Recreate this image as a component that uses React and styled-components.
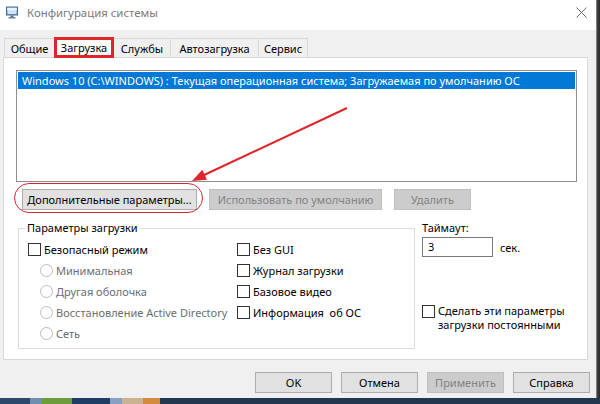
import styled, { createGlobalStyle, css } from "styled-components"

const GlobalStyle = createGlobalStyle`
	html, body {
		margin: 0;
		padding: 0;
	}
	body {
		font-family: "Noto Sans", "Liberation Sans", sans-serif;
		font-size: 11px;
		color: #000;
	}
`

const Screen = styled.div`
	position: relative;
	width: 600px;
	height: 404px;
	display: flex;
	flex-direction: column;
	overflow: hidden;
	background: #f0f0f0;
`

const Desktop = styled.div`
	flex: 1;
	min-height: 0;
	display: flex;
`

const Window = styled.div`
	width: 596px;
	display: flex;
	flex-direction: column;
	background: #f0f0f0;
`

const Edge = styled.div`
	width: 4px;
	background: linear-gradient(to right, #9a9a9a, #3a3a3a 40%, #2a2a2a);
`

const TitleBar = styled.div`
	height: 30px;
	box-sizing: border-box;
	padding: 0 9px 6px 5px;
	background: #fff;
	display: flex;
	align-items: center;
`

const TitleText = styled.span`
	flex: 1;
	margin-left: 8px;
	font-size: 11.4px;
	color: #7a7a7a;
`

const Client = styled.div`
	flex: 1;
	display: flex;
	flex-direction: column;
	padding: 6px 8px 0 3px;
`

const TabStrip = styled.div`
	height: 21px;
	display: flex;
	align-items: flex-end;
	padding-left: 1px;
	position: relative;
	z-index: 1;
`

const Tab = styled.div`
	width: ${(p) => p.$w}px;
	height: 19px;
	box-sizing: border-box;
	margin-left: -1px;
	border: 1px solid #d9d9d9;
	border-bottom: none;
	background: #f0f0f0;
	display: flex;
	align-items: center;
	justify-content: center;
	white-space: nowrap;
	&:first-child {
		margin-left: 0;
	}
	${(p) =>
		p.$marked &&
		css`
			height: 21px;
			margin-bottom: -1px;
			background: #fff;
			border: 3px solid #e0242c;
			position: relative;
			z-index: 2;
		`}
`

const TabPanel = styled.div`
	height: 303px;
	box-sizing: border-box;
	border: 1px solid #d9d9d9;
	background: #fff;
	padding: 12px 10px 0 12px;
	display: flex;
	flex-direction: column;
`

const ListBox = styled.div`
	height: 112px;
	box-sizing: border-box;
	border: 1px solid #8f8f8f;
	padding: 1px;
`

const ListItem = styled.div`
	height: 17px;
	line-height: 17px;
	padding-left: 4px;
	background: ${(p) => (p.$selected ? "#0078d7" : "transparent")};
	color: ${(p) => (p.$selected ? "#fff" : "#000")};
	white-space: nowrap;
	overflow: hidden;
`

const ButtonRow = styled.div`
	margin-top: 7px;
	padding-left: 6px;
	display: flex;
	gap: 12px;
`

const Button = styled.div`
	position: relative;
	width: ${(p) => p.$w}px;
	height: 21px;
	box-sizing: border-box;
	border: 1px solid ${(p) => (p.$disabled ? "#bfbfbf" : "#adadad")};
	background: ${(p) => (p.$disabled ? "#cccccc" : "#e1e1e1")};
	color: ${(p) => (p.$disabled ? "#838383" : "#000")};
	display: flex;
	align-items: center;
	justify-content: center;
	white-space: nowrap;
	${(p) =>
		p.$circled &&
		css`
			&::after {
				content: "";
				position: absolute;
				top: -7px;
				bottom: -4px;
				left: -9px;
				right: -7px;
				border: 1.5px solid #d8262e;
				border-radius: 16px;
			}
		`}
`

const ParamsRow = styled.div`
	margin-top: 10px;
	padding-left: 2px;
	display: flex;
`

const GroupBox = styled.fieldset`
	width: 397px;
	height: 129px;
	box-sizing: border-box;
	margin: 0;
	padding: 3px 9px 0;
	border: 1px solid #dcdcdc;
	min-width: 0;
	display: grid;
	grid-template-columns: 209px 1fr;
	align-content: start;
`

const Legend = styled.legend`
	margin-left: -3px;
	padding: 0 2px;
	line-height: 16px;
`

const Column = styled.div`
	display: flex;
	flex-direction: column;
`

const Option = styled.div`
	height: 21px;
	display: flex;
	align-items: center;
	white-space: pre;
	color: ${(p) => (p.$disabled ? "#6d6d6d" : "#000")};
	padding-left: ${(p) => (p.$indent ? 12 : 0)}px;
`

const CheckBox = styled.span`
	width: 13px;
	height: 13px;
	box-sizing: border-box;
	border: 1px solid #333;
	background: #fff;
	margin-right: 3px;
	flex-shrink: 0;
`

const Radio = styled.span`
	width: 13px;
	height: 13px;
	box-sizing: border-box;
	border: 1px solid #bcbcbc;
	border-radius: 50%;
	background: #fff;
	margin-right: 3px;
	flex-shrink: 0;
`

const SideColumn = styled.div`
	margin-left: 7px;
	display: flex;
	flex-direction: column;
`

const Label = styled.div`
	line-height: 16px;
`

const InputRow = styled.div`
	margin-top: 1px;
	display: flex;
	align-items: center;
`

const TextInput = styled.div`
	width: 71px;
	height: 20px;
	box-sizing: border-box;
	border: 1px solid #7a7a7a;
	background: #fff;
	padding-left: 5px;
	line-height: 18px;
`

const Unit = styled.span`
	margin-left: 7px;
`

const PermanentRow = styled.div`
	margin-top: 48px;
	display: flex;
	align-items: flex-start;
`

const PermanentText = styled.div`
	line-height: 14px;
	margin-top: -1px;
`

const Footer = styled.div`
	margin-top: 12px;
	margin-right: -2px;
	display: flex;
	justify-content: flex-end;
	gap: 9px;
`

const Taskbar = styled.div`
	height: 6px;
	display: flex;
	background: #21384f;
`

const TaskSegment = styled.div`
	width: ${(p) => p.$w}px;
	background: ${(p) => p.$c};
`

const Overlay = styled.svg`
	position: absolute;
	left: 0;
	top: 0;
	pointer-events: none;
`

function AppIcon() {
	return (
		<svg width="14" height="14" viewBox="0 0 14 14">
			<rect x="1" y="1.5" width="12" height="9" rx="0.5" fill="#4a6a96" />
			<rect x="2.3" y="2.8" width="9.4" height="6.4" fill="#cfe3f7" />
			<rect x="2.3" y="2.8" width="9.4" height="2.4" fill="#eaf3fc" />
			<rect x="5.5" y="10.5" width="3" height="1.5" fill="#5a6f8a" />
			<rect x="3.5" y="12" width="7" height="1.5" fill="#6f8199" />
		</svg>
	)
}

function CloseIcon() {
	return (
		<svg width="11" height="11" viewBox="0 0 11 11">
			<path d="M0.5 0.5 L10.5 10.5 M10.5 0.5 L0.5 10.5" stroke="#6b6b6b" strokeWidth="1" />
		</svg>
	)
}

const tabs = [
	{ name: "Общие", w: 51 },
	{ name: "Загрузка", w: 60, marked: true },
	{ name: "Службы", w: 58 },
	{ name: "Автозагрузка", w: 89 },
	{ name: "Сервис", w: 50 },
]

const safeModes = ["Минимальная", "Другая оболочка", "Восстановление Active Directory", "Сеть"]

const extraOptions = ["Без GUI", "Журнал загрузки", "Базовое видео", "Информация  об ОС"]

const taskColors = [
	[30, "#2b4a6b"],
	[12, "#6f8fb0"],
	[30, "#6d9c3c"],
	[38, "#1f3e66"],
	[12, "#8aa0c0"],
	[21, "#c9b393"],
	[17, "#d48b3e"],
]

export default function App() {
	return (
		<>
			<GlobalStyle />
			<Screen>
				<Desktop>
					<Window>
						<TitleBar>
							<AppIcon />
							<TitleText>Конфигурация системы</TitleText>
							<CloseIcon />
						</TitleBar>
						<Client>
							<TabStrip>
								{tabs.map((t) => (
									<Tab key={t.name} $w={t.w} $marked={t.marked}>
										{t.name}
									</Tab>
								))}
							</TabStrip>
							<TabPanel>
								<ListBox>
									<ListItem $selected>
										Windows 10 (C:\WINDOWS) : Текущая операционная система; Загружаемая по умолчанию ОС
									</ListItem>
								</ListBox>
								<ButtonRow>
									<Button $w={175} $circled>
										Дополнительные параметры...
									</Button>
									<Button $w={173} $disabled>
										Использовать по умолчанию
									</Button>
									<Button $w={77} $disabled>
										Удалить
									</Button>
								</ButtonRow>
								<ParamsRow>
									<GroupBox>
										<Legend>Параметры загрузки</Legend>
										<Column>
											<Option>
												<CheckBox />
												Безопасный режим
											</Option>
											{safeModes.map((m) => (
												<Option key={m} $indent $disabled>
													<Radio />
													{m}
												</Option>
											))}
										</Column>
										<Column>
											{extraOptions.map((o) => (
												<Option key={o}>
													<CheckBox />
													{o}
												</Option>
											))}
										</Column>
									</GroupBox>
									<SideColumn>
										<Label>Таймаут:</Label>
										<InputRow>
											<TextInput>3</TextInput>
											<Unit>сек.</Unit>
										</InputRow>
										<PermanentRow>
											<CheckBox />
											<PermanentText>
												Сделать эти параметры
												<br />
												загрузки постоянными
											</PermanentText>
										</PermanentRow>
									</SideColumn>
								</ParamsRow>
							</TabPanel>
							<Footer>
								<Button $w={77}>OK</Button>
								<Button $w={77}>Отмена</Button>
								<Button $w={77} $disabled>
									Применить
								</Button>
								<Button $w={77}>Справка</Button>
							</Footer>
						</Client>
					</Window>
					<Edge />
				</Desktop>
				<Taskbar>
					{taskColors.map(([w, c], i) => (
						<TaskSegment key={i} $w={w} $c={c} />
					))}
				</Taskbar>
				<Overlay width="600" height="404" viewBox="0 0 600 404">
					<line x1="347" y1="108" x2="203" y2="175.5" stroke="#e0242c" strokeWidth="2" />
					<polygon points="192,181 207,179.8 202.3,169.8" fill="#e0242c" />
				</Overlay>
			</Screen>
		</>
	)
}
